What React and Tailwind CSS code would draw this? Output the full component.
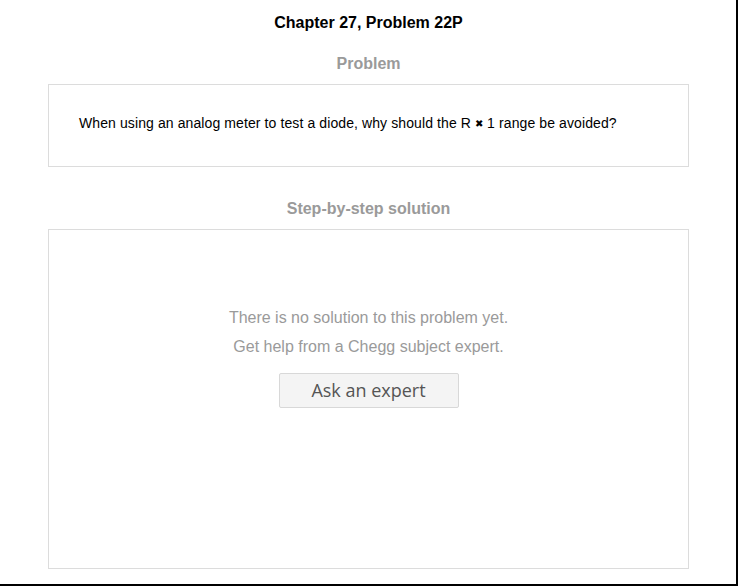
export default function App() {
  return (
    <div className="w-[738px] h-[586px] bg-white border-r-2 border-b-2 border-black font-['Liberation_Sans',Arial,sans-serif] box-border">
      <div className="pl-12 pr-[47px]">
        <h1 className="pt-[13px] text-center text-[16px] leading-[20px] font-bold text-black">
          Chapter 27, Problem 22P
        </h1>
        <h2 className="mt-[21px] text-center text-[16px] leading-[20px] font-bold text-[#9a9a9a]">
          Problem
        </h2>
        <div className="mt-[10px] border border-[#dcdcdc] pl-[30px] pr-4 pt-[30px] pb-[35px] h-[83px] box-border">
          <p className="text-[14px] leading-[16px] tracking-[0.1px] text-black">
            When using an analog meter to test a diode, why should the R <span className="text-[10px] align-[1px]">✖</span> 1 range be avoided?
          </p>
        </div>
        <h2 className="mt-[32px] text-center text-[16px] leading-[20px] font-bold text-[#9a9a9a]">
          Step-by-step solution
        </h2>
        <div className="mt-[10px] border border-[#dcdcdc] h-[340px] box-border flex flex-col items-center pt-[78px]">
          <p className="text-[16px] leading-[20px] text-[#9a9a9a]">There is no solution to this problem yet.</p>
          <p className="mt-[9px] text-[16px] leading-[20px] text-[#9a9a9a]">Get help from a Chegg subject expert.</p>
          <button className="mt-[16px] w-[180px] h-[35px] bg-[#f4f4f4] border border-[#d8d8d8] rounded-[2px] text-[18px] text-[#555] font-['Open_Sans',sans-serif]">
            Ask an expert
          </button>
        </div>
      </div>
    </div>
  );
}
